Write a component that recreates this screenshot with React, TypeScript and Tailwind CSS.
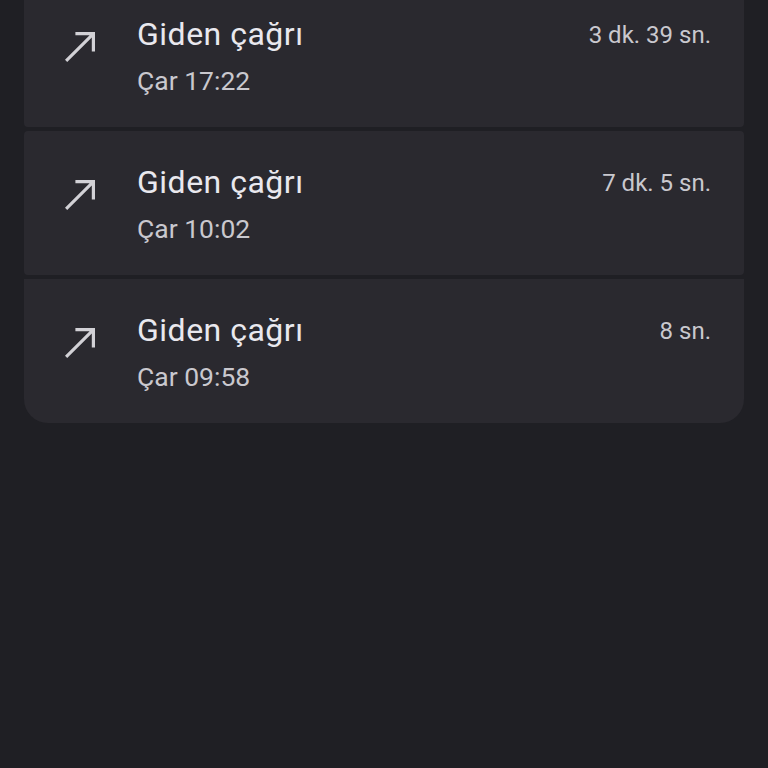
import React from 'react';

interface CallItem {
  label: string;
  time: string;
  duration: string;
}

const calls: CallItem[] = [
  { label: 'Giden çağrı', time: 'Çar 17:22', duration: '3 dk. 39 sn.' },
  { label: 'Giden çağrı', time: 'Çar 10:02', duration: '7 dk. 5 sn.' },
  { label: 'Giden çağrı', time: 'Çar 09:58', duration: '8 sn.' },
];

function OutgoingIcon() {
  return (
    <svg width="48" height="48" viewBox="0 0 24 24" fill="#d2d1d6">
      <path d="M9.2 5v1.6h7.1L4 18.9 5.1 20 17.4 7.7v7.1H19V5z" />
    </svg>
  );
}

export default function App() {
  return (
    <div
      className="h-[768px] w-[768px] overflow-hidden bg-[#1f1f24] px-6"
      style={{ fontFamily: 'Roboto, "Noto Sans", sans-serif' }}
    >
      <ul className="-mt-[17px] flex flex-col gap-1">
        {calls.map((c, i) => (
          <li
            key={i}
            className={
              'flex h-[144px] bg-[#2a292f] ' +
              (i === calls.length - 1 ? 'rounded-b-[24px]' : 'rounded-[4px]')
            }
          >
            <div className="w-[113px] shrink-0 pl-[33px] pt-[39px]">
              <OutgoingIcon />
            </div>
            <div className="flex-1 pt-[31px]">
              <p className="text-[32px] leading-[40px] tracking-[0.5px] text-[#e9e8ee]">{c.label}</p>
              <p className="mt-[9px] text-[26.5px] leading-[36px] text-[#c9c8ce]">{c.time}</p>
            </div>
            <div className="pr-[33px] pt-[34px]">
              <p className="text-[24px] leading-[36px] text-[#c9c8ce]">{c.duration}</p>
            </div>
          </li>
        ))}
      </ul>
    </div>
  );
}
